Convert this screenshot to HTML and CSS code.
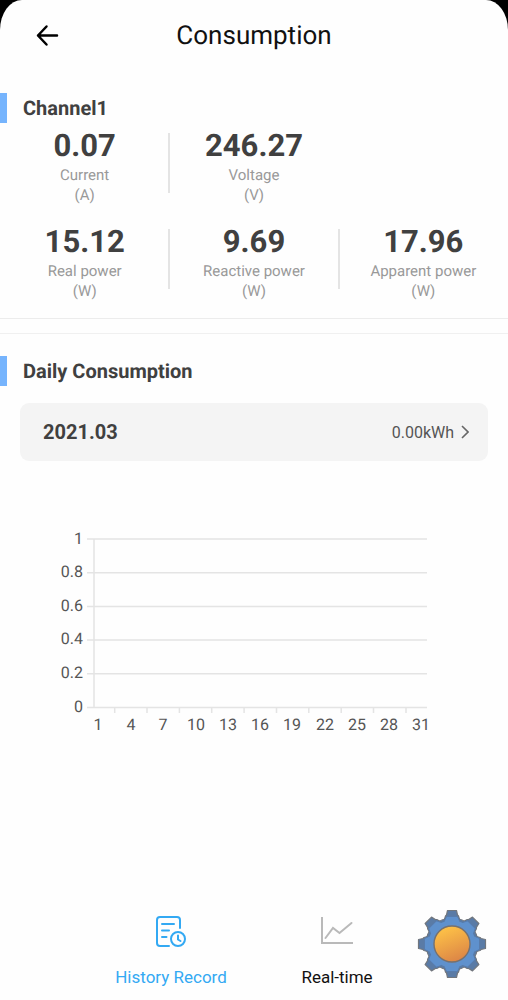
FILE: index.html
```html
<!DOCTYPE html>
<html lang="en">
<head>
<meta charset="utf-8">
<meta name="viewport" content="width=device-width, initial-scale=1">
<title>Consumption</title>
<link rel="stylesheet" href="styles.css">
</head>
<body>
<div class="screen">
  <header class="topbar">
    <button class="back" type="button" aria-label="Back">
      <svg width="24" height="24" viewBox="0 0 24 24" fill="none" stroke="#000" stroke-width="2.5" stroke-linecap="round" stroke-linejoin="round"><path d="M21 11.500H2M10.500 2.500L2 11.500l8.500 9"/></svg>
    </button>
    <h1 class="title">Consumption</h1>
  </header>

  <main class="content">
    <section class="channel">
      <h2 class="heading">Channel1</h2>
      <div class="stats">
        <div class="stat"><strong class="value">0.07</strong><span class="label">Current</span><span class="label">(A)</span></div>
        <div class="stat divided"><strong class="value">246.27</strong><span class="label">Voltage</span><span class="label">(V)</span></div>
      </div>
      <div class="stats">
        <div class="stat"><strong class="value">15.12</strong><span class="label">Real power</span><span class="label">(W)</span></div>
        <div class="stat divided"><strong class="value">9.69</strong><span class="label">Reactive power</span><span class="label">(W)</span></div>
        <div class="stat divided"><strong class="value">17.96</strong><span class="label">Apparent power</span><span class="label">(W)</span></div>
      </div>
    </section>

    <section class="daily">
      <h2 class="heading">Daily Consumption</h2>
      <button class="month" type="button">
        <span class="month-name">2021.03</span>
        <span class="month-total">0.00kWh</span>
        <svg width="8" height="14" viewBox="0 0 8 14" fill="none" stroke="#666" stroke-width="1.6"><path d="M1 1l6 6-6 6"/></svg>
      </button>
      <svg class="chart" viewBox="0 0 508 220" role="img" aria-label="Daily consumption chart">
        <g class="grid">
          <path d="M87 19H427M87 52.700H427M87 86.400H427M87 120H427M87 153.700H427M87 187.500H427M94 19V187.500"/>
          <path d="M114.700 187V193M147 187V193M179.400 187V193M211.700 187V193M244.100 187V193M276.500 187V193M308.800 187V193M341.200 187V193M373.500 187V193M406 187V193"/>
        </g>
        <g class="y-labels">
          <text x="83" y="24">1</text><text x="83" y="57">0.8</text><text x="83" y="91">0.6</text><text x="83" y="124">0.4</text><text x="83" y="158">0.2</text><text x="83" y="192">0</text>
        </g>
        <g class="x-labels">
          <text x="98" y="210">1</text><text x="131" y="210">4</text><text x="163" y="210">7</text><text x="196" y="210">10</text><text x="228" y="210">13</text><text x="260" y="210">16</text><text x="292" y="210">19</text><text x="325" y="210">22</text><text x="357" y="210">25</text><text x="389" y="210">28</text><text x="421" y="210">31</text>
        </g>
      </svg>
    </section>
  </main>

  <nav class="tabs">
    <button class="tab active" type="button">
      <svg width="32" height="32" viewBox="0 0 32 32" fill="none" stroke="#33a9f3" stroke-width="2" stroke-linecap="round">
        <path d="M25 13V5Q25 2 22 2H5Q2 2 2 5V28Q2 31 5 31H14"/>
        <path d="M7 9H19M7 15.500H14M7 22H11.500"/>
        <circle cx="23" cy="24" r="7"/><path d="M23 20.500V24.500L25.500 26"/>
      </svg>
      <span>History Record</span>
    </button>
    <button class="tab" type="button">
      <svg width="32" height="32" viewBox="0 0 32 32" fill="none" stroke="#b9b9b9" stroke-width="2">
        <path d="M1 2V28H32"/><path d="M4.500 23L12 13L18.500 18L30.500 8" stroke-linecap="round"/>
      </svg>
      <span>Real-time</span>
    </button>
  </nav>

  <button class="gear" type="button" aria-label="Settings">
    <svg width="70" height="70" viewBox="-35 -35 70 70">
      <defs>
        <linearGradient id="sun" x1="0.3" y1="0" x2="0.7" y2="1"><stop offset="0" stop-color="#ffc447"/><stop offset="1" stop-color="#db8346"/></linearGradient>
        <path id="tooth" d="M-8 -23L-6.500 -28L-5.500 -29L-4.500 -33.500H4.500L5.500 -29L6.500 -28L8 -23Z"/>
        <path id="inner" d="M-9 -20L-5.500 -27.500H5.500L9 -20Z"/>
      </defs>
      <g fill="#5a7ba6" stroke="#71767d" stroke-width="1.200" stroke-linejoin="round">
        <circle r="26"/>
        <use href="#tooth"/><use href="#tooth" transform="rotate(45)"/><use href="#tooth" transform="rotate(90)"/><use href="#tooth" transform="rotate(135)"/><use href="#tooth" transform="rotate(180)"/><use href="#tooth" transform="rotate(225)"/><use href="#tooth" transform="rotate(270)"/><use href="#tooth" transform="rotate(315)"/>
      </g>
      <circle r="25.500" fill="#5a7ba6"/>
      <g fill="#5f91cd" stroke="#587cac" stroke-width="1">
        <use href="#inner"/><use href="#inner" transform="rotate(45)"/><use href="#inner" transform="rotate(90)"/><use href="#inner" transform="rotate(135)"/><use href="#inner" transform="rotate(180)"/><use href="#inner" transform="rotate(225)"/><use href="#inner" transform="rotate(270)"/><use href="#inner" transform="rotate(315)"/>
      </g>
      <circle r="23.500" fill="#5f91cd"/>
      <circle r="18" fill="url(#sun)" stroke="#76716f" stroke-width="1.400"/>
    </svg>
  </button>
</div>
</body>
</html>
```
FILE: styles.css
```css
* { box-sizing: border-box; }
body { margin: 0; background: #000; font-family: Roboto, "Liberation Sans", sans-serif; color: #404040; text-rendering: geometricPrecision; }
button { border: 0; margin: 0; padding: 0; background: none; font: inherit; color: inherit; cursor: pointer; }
svg { display: block; }
.screen { position: relative; display: flex; flex-direction: column; min-height: 100vh; background: #fefefe; border-radius: 22px 22px 0 0 / 30px 30px 0 0; }
.topbar { display: grid; grid-template-columns: 60px 1fr 60px; align-items: center; height: 72px; }
.back { padding-left: 36px; }
.title { margin: 0; text-align: center; font-size: 26px; line-height: 32px; font-weight: 400; color: #111; }
.content { display: flex; flex-direction: column; }
.channel { padding-top: 21px; padding-bottom: 17px; border-bottom: 1px solid #ececec; }
.heading { margin: 0; border-left: 7px solid #76b4fd; padding-left: 16px; font-size: 20px; line-height: 30px; font-weight: 700; }
.stats { display: grid; grid-template-columns: repeat(3, 1fr); padding-top: 4px; }
.stats + .stats { margin-top: 14px; }
.stat { position: relative; display: flex; flex-direction: column; align-items: center; height: 78px; }
.divided::before { content: ""; position: absolute; left: -1px; top: 6px; width: 2px; height: 60px; background: #e4e4e4; }
.value { font-size: 31px; line-height: 38px; font-weight: 700; }
.label { font-size: 15px; line-height: 20px; color: #999; }
.daily { margin-top: 14px; border-top: 1px solid #f0f0f0; padding-top: 22px; }
.month { display: flex; align-items: center; gap: 7px; width: calc(100% - 40px); height: 58px; margin: 17px 20px 0; padding: 0 19px 0 23px; border-radius: 9px; background: #f4f4f4; }
.month-name { margin-right: auto; font-size: 20px; font-weight: 700; }
.month-total { font-size: 16px; color: #555; }
.chart { width: 100%; margin-top: 59px; font-size: 16px; fill: #555; }
.grid { fill: none; stroke: #e4e4e4; stroke-width: 1.5; }
.y-labels { text-anchor: end; }
.x-labels { text-anchor: middle; }
.tabs { display: flex; margin-top: auto; padding: 0 88px 11px; }
.tab { flex: 1; display: flex; flex-direction: column; align-items: center; gap: 18px; font-size: 17px; line-height: 24px; color: #111; white-space: nowrap; }
.active { color: #33a9f3; }
.gear { position: absolute; right: 21px; bottom: 21px; }
```
